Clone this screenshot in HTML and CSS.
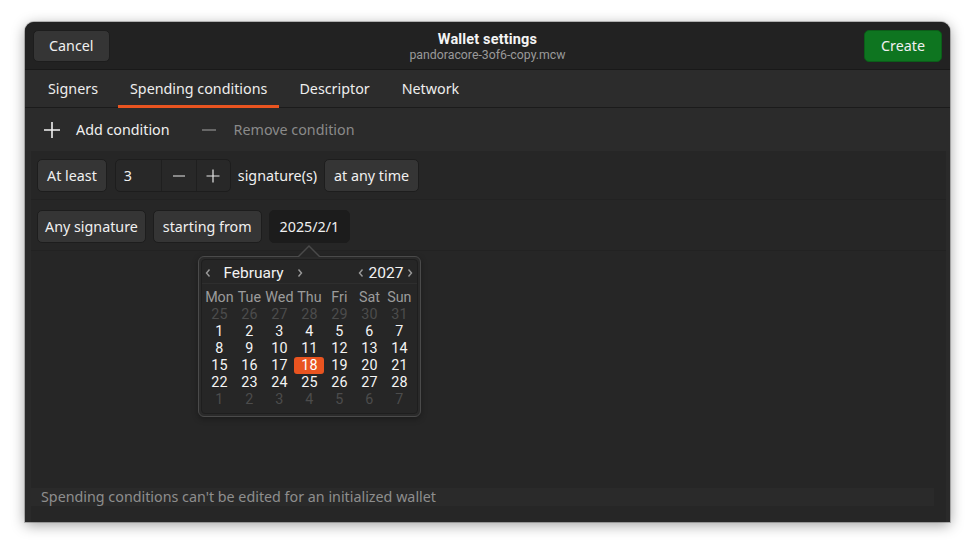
FILE: index.html
```html
<!DOCTYPE html>
<html>
<head>
<meta charset="utf-8">
<link rel="stylesheet" href="styles.css">
</head>
<body>
<div class="window">
  <header class="headerbar">
    <div class="hb-start"><button class="btn">Cancel</button></div>
    <div class="title-box">
      <div class="title">Wallet settings</div>
      <div class="subtitle">pandoracore-3of6-copy.mcw</div>
    </div>
    <div class="hb-end"><button class="btn btn-green">Create</button></div>
  </header>
  <nav class="tabs">
    <div class="tab">Signers</div>
    <div class="tab active">Spending conditions</div>
    <div class="tab">Descriptor</div>
    <div class="tab">Network</div>
  </nav>
  <div class="toolbar">
    <div class="tool">
      <svg class="icon" width="18" height="18" viewBox="0 0 18 18"><path d="M9 1v16M1 9h16" stroke="#f2f2f2" stroke-width="1.6" fill="none"/></svg>
      <span>Add condition</span>
    </div>
    <div class="tool disabled">
      <svg class="icon" width="18" height="18" viewBox="0 0 18 18"><path d="M2 9h14" stroke="#7d7d7d" stroke-width="1.6" fill="none"/></svg>
      <span>Remove condition</span>
    </div>
  </div>
  <div class="content">
    <div class="list">
      <div class="row row-first">
        <button class="btn">At least</button>
        <div class="spin">
          <div class="spin-entry">3</div>
          <div class="spin-btn spin-minus"><svg width="14" height="14" viewBox="0 0 14 14"><path d="M1 7h12" stroke="#e8e8e8" stroke-width="1.2"/></svg></div>
          <div class="spin-btn"><svg width="14" height="14" viewBox="0 0 14 14"><path d="M7 0.5v13M0.5 7h13" stroke="#e8e8e8" stroke-width="1.2"/></svg></div>
        </div>
        <span class="label">signature(s)</span>
        <button class="btn">at any time</button>
      </div>
      <div class="row">
        <button class="btn btn-narrow">Any signature</button>
        <button class="btn">starting from</button>
        <div class="date-wrap">
          <button class="btn btn-active">2025/2/1</button>
          <div class="popover">
            <div class="arrow"></div>
            <div class="calendar">
              <div class="cal-head">
                <div class="nav">
                  <svg class="chev" width="8" height="10" viewBox="0 0 8 10"><path d="M5.5 1.5L2.5 5l3 3.5" stroke="#9a9a9a" stroke-width="1.4" fill="none"/></svg>
                  <span class="month">February</span>
                  <svg class="chev" width="8" height="10" viewBox="0 0 8 10"><path d="M2.5 1.5L5.5 5l-3 3.5" stroke="#9a9a9a" stroke-width="1.4" fill="none"/></svg>
                </div>
                <div class="nav">
                  <svg class="chev" width="8" height="10" viewBox="0 0 8 10"><path d="M5.5 1.5L2.5 5l3 3.5" stroke="#9a9a9a" stroke-width="1.4" fill="none"/></svg>
                  <span class="year">2027</span>
                  <svg class="chev" width="8" height="10" viewBox="0 0 8 10"><path d="M2.5 1.5L5.5 5l-3 3.5" stroke="#9a9a9a" stroke-width="1.4" fill="none"/></svg>
                </div>
              </div>
              <div class="cal-grid">
                <span class="wd">Mon</span><span class="wd">Tue</span><span class="wd">Wed</span><span class="wd">Thu</span><span class="wd">Fri</span><span class="wd">Sat</span><span class="wd">Sun</span>
                <span class="d other">25</span><span class="d other">26</span><span class="d other">27</span><span class="d other">28</span><span class="d other">29</span><span class="d other">30</span><span class="d other">31</span>
                <span class="d">1</span><span class="d">2</span><span class="d">3</span><span class="d">4</span><span class="d">5</span><span class="d">6</span><span class="d">7</span>
                <span class="d">8</span><span class="d">9</span><span class="d">10</span><span class="d">11</span><span class="d">12</span><span class="d">13</span><span class="d">14</span>
                <span class="d">15</span><span class="d">16</span><span class="d">17</span><span class="d sel">18</span><span class="d">19</span><span class="d">20</span><span class="d">21</span>
                <span class="d">22</span><span class="d">23</span><span class="d">24</span><span class="d">25</span><span class="d">26</span><span class="d">27</span><span class="d">28</span>
                <span class="d other">1</span><span class="d other">2</span><span class="d other">3</span><span class="d other">4</span><span class="d other">5</span><span class="d other">6</span><span class="d other">7</span>
              </div>
            </div>
          </div>
        </div>
      </div>
    </div>
    <div class="filler"></div>
    <div class="status">Spending conditions can't be edited for an initialized wallet</div>
  </div>
</div>
</body>
</html>
```

FILE: styles.css
```css
* { box-sizing: border-box; }
html, body { margin: 0; padding: 0; }
body {
  background: #ffffff;
  width: 975px;
  height: 550px;
  padding: 22px 25px 0 25px;
  font-family: "Noto Sans", "DejaVu Sans", sans-serif;
  font-size: 14.3px;
  color: #f0f0f0;
  overflow: hidden;
}
.window {
  width: 925px;
  height: 500px;
  background: #2a2a2a;
  border-radius: 9px 9px 0 0;
  box-shadow: 0 3px 14px rgba(0,0,0,0.38), 0 0 0 1px rgba(0,0,0,0.22);
  display: flex;
  flex-direction: column;
  overflow: hidden;
}
.headerbar {
  height: 48px;
  background: #222222;
  border-bottom: 1px solid #191919;
  display: grid;
  grid-template-columns: 1fr auto 1fr;
  align-items: center;
  padding: 0 8px;
  flex: none;
}
.hb-end { justify-self: end; }
.title-box {
  text-align: center;
  font-family: Roboto, "Noto Sans", sans-serif;
  padding-top: 2px;
}
.title { font-weight: bold; font-size: 14.5px; line-height: 16px; color: #f4f4f4; letter-spacing: 0.15px; }
.subtitle { font-size: 12.3px; line-height: 14px; color: #9a9a9a; }
.btn {
  font-family: inherit;
  font-size: 14.3px;
  color: #f0f0f0;
  background: #353535;
  border: 1px solid #1d1d1d;
  border-radius: 5px;
  height: 33px;
  padding: 0 9px;
  line-height: 31px;
  cursor: default;
}
.btn-narrow { padding: 0 7px; }
.headerbar .btn { height: 32px; line-height: 30px; padding: 0 15px; }
.headerbar .btn-green { background: #0e7520; border-color: #0b5e19; padding: 0 16px; }
.btn-active { background: #1c1c1c; border-color: #1c1c1c; padding: 0 10px; }
.tabs {
  height: 38px;
  background: #2c2c2c;
  border-bottom: 1px solid #1b1b1b;
  display: flex;
  gap: 8px;
  padding-left: 11px;
  flex: none;
}
.tab {
  padding: 0 12px;
  line-height: 37px;
  color: #eeeeee;
  position: relative;
}
.tab.active::after {
  content: "";
  position: absolute;
  left: 0; right: 0; bottom: -1px;
  height: 3px;
  background: #e95420;
}
.toolbar {
  height: 43px;
  background: #2b2b2b;
  display: flex;
  align-items: center;
  padding-left: 18px;
  gap: 30px;
  flex: none;
}
.tool { display: flex; align-items: center; gap: 15px; color: #f0f0f0; }
.tool.disabled { color: #8a8a8a; gap: 16px; }
.icon { display: block; }
.content {
  flex: 1;
  display: flex;
  flex-direction: column;
  background: #262626;
  margin: 0 4px 0 6px;
}
.list { flex: none; }
.row {
  display: flex;
  align-items: center;
  gap: 7px;
  padding: 10px 6px 7px;
  border-bottom: 1px solid #222222;
  height: 51px;
}
.row-first { padding: 8px 6px 7px; height: 49px; }
.spin {
  display: flex;
  height: 33px;
  border: 1px solid #1d1d1d;
  border-radius: 5px;
  background: #282828;
  overflow: hidden;
  margin-left: 1px;
}
.spin-entry { width: 45px; padding-left: 8px; line-height: 31px; }
.spin-btn {
  width: 34px;
  border-left: 1px solid #1f1f1f;
  display: flex;
  align-items: center;
  justify-content: center;
}
.spin-minus { width: 35px; }
.label { color: #f0f0f0; }
.date-wrap { position: relative; }
.popover {
  position: absolute;
  top: 46px;
  left: 50%;
  margin-left: -111px;
  width: 223px;
  height: 161px;
  background: #2a2a2a;
  border: 1px solid #4a4a4a;
  border-radius: 6px;
  padding: 2px;
  box-shadow: 0 2px 6px rgba(0,0,0,0.3);
  font-family: Roboto, "Noto Sans", sans-serif;
}
.arrow {
  position: absolute;
  top: -12px;
  left: 50%;
  margin-left: -12px;
  width: 0; height: 0;
  border-left: 11px solid transparent;
  border-right: 11px solid transparent;
  border-bottom: 11px solid #4a4a4a;
}
.arrow::after {
  content: "";
  position: absolute;
  left: -10px; top: 1.5px;
  border-left: 10px solid transparent;
  border-right: 10px solid transparent;
  border-bottom: 10px solid #262626;
}
.calendar {
  border: 1px solid #1e1e1e;
  border-radius: 4px;
  height: 100%;
  background: #262626;
}
.cal-head {
  height: 24px;
  display: flex;
  justify-content: space-between;
  align-items: center;
  padding: 2px 3px 0 2px;
  border-bottom: 1px solid #2e2e2e;
}
.nav { display: flex; align-items: center; }
.chev { display: block; }
.month { margin: 0 12px 0 11px; font-size: 15.5px; color: #f2f2f2; }
.year { margin: 0 3px 0 4px; font-size: 15.5px; color: #f2f2f2; }
.cal-grid {
  display: grid;
  grid-template-columns: repeat(7, 30px);
  grid-auto-rows: 17px;
  padding: 5px 0 0 2px;
  font-size: 14.3px;
  line-height: 17px;
  text-align: center;
}
.wd { color: #9c9c9c; }
.d { color: #f4f4f4; }
.d.other { color: #4c4c4c; }
.d.sel { background: #e95420; border-radius: 3px; color: #ffffff; }
.filler { flex: 1; }
.status {
  height: 18px;
  line-height: 18px;
  background: #2a2a2a;
  color: #8e8e8e;
  padding-left: 10px;
  margin: 0 12px 16px 0;
  font-size: 14.3px;
}
```
